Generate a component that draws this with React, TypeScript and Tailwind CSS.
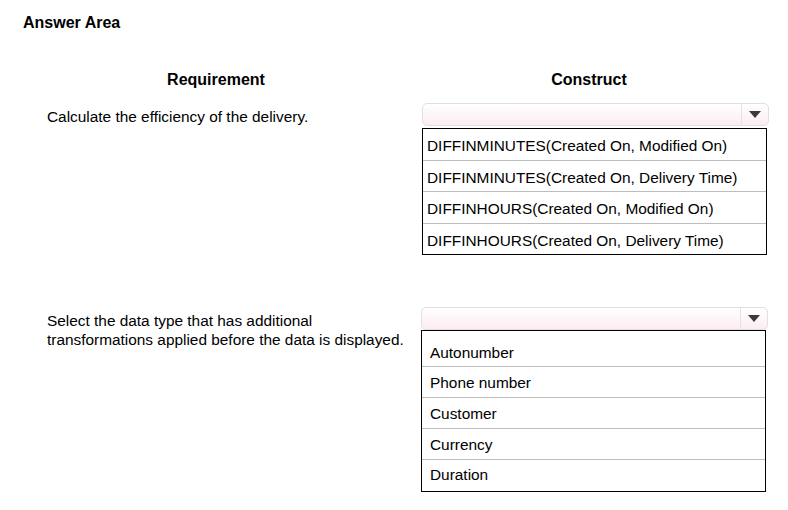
const constructs = [
  'DIFFINMINUTES(Created On, Modified On)',
  'DIFFINMINUTES(Created On, Delivery Time)',
  'DIFFINHOURS(Created On, Modified On)',
  'DIFFINHOURS(Created On, Delivery Time)',
];

const dataTypes = ['Autonumber', 'Phone number', 'Customer', 'Currency', 'Duration'];

function Dropdown() {
  return (
    <div className="flex h-[23px] w-[347px] rounded-[5px] border border-[#e0e0e0] bg-gradient-to-b from-white to-[#fcedf1]">
      <div className="flex-1" />
      <div className="flex w-[27px] items-center justify-center border-l border-[#e4e4e4]">
        <svg width="12" height="7" viewBox="0 0 12 7">
          <path d="M0 0H12L6 7Z" fill="#3a3a3a" />
        </svg>
      </div>
    </div>
  );
}

export default function App() {
  return (
    <div className="h-[510px] w-[788px] bg-white text-black" style={{ fontFamily: '"Liberation Sans", Arial, sans-serif' }}>
      <div className="pl-[23px] pt-[14px] text-[16px] font-bold leading-[18px]">Answer Area</div>

      {/* headers */}
      <div className="mt-[39px] flex text-[16px] font-bold leading-[18px]">
        <div className="w-[432px] text-center">Requirement</div>
        <div className="w-[314px] text-center">Construct</div>
      </div>

      {/* first question */}
      <div className="mt-[14px] flex">
        <div className="w-[422px] pl-[47px] pt-[5px] text-[15.4px] leading-[17px]">
          Calculate the efficiency of the delivery.
        </div>
        <div>
          <Dropdown />
          <div className="mt-[2px] w-[345px] border border-black text-[15.4px] leading-[17px]">
            {constructs.map((c, i) => (
              <div
                key={c}
                className={`flex items-center pl-[4px] pt-[2px] ${i > 0 ? 'border-t border-[#bdbdbd]' : ''} ${i === 2 ? 'h-[32px]' : 'h-[31px]'}`}
              >
                {c}
              </div>
            ))}
          </div>
        </div>
      </div>

      {/* second question */}
      <div className="mt-[52px] flex">
        <div className="w-[421px] pl-[47px] pt-[4px] text-[15.4px] leading-[19px]">
          Select the data type that has additional
          <br />
          transformations applied before the data is displayed.
        </div>
        <div>
          <Dropdown />
          <div className="w-[345px] border border-black text-[15.4px] leading-[17px]">
            <div className="flex h-[35px] items-end pb-[5px] pl-[8px]">{dataTypes[0]}</div>
            {dataTypes.slice(1).map((d, i) => (
              <div
                key={d}
                className={`flex items-center border-t border-[#bdbdbd] pl-[8px] ${i === 3 ? 'h-[32px] pb-[2px]' : 'h-[31px]'}`}
              >
                {d}
              </div>
            ))}
          </div>
        </div>
      </div>
    </div>
  );
}
